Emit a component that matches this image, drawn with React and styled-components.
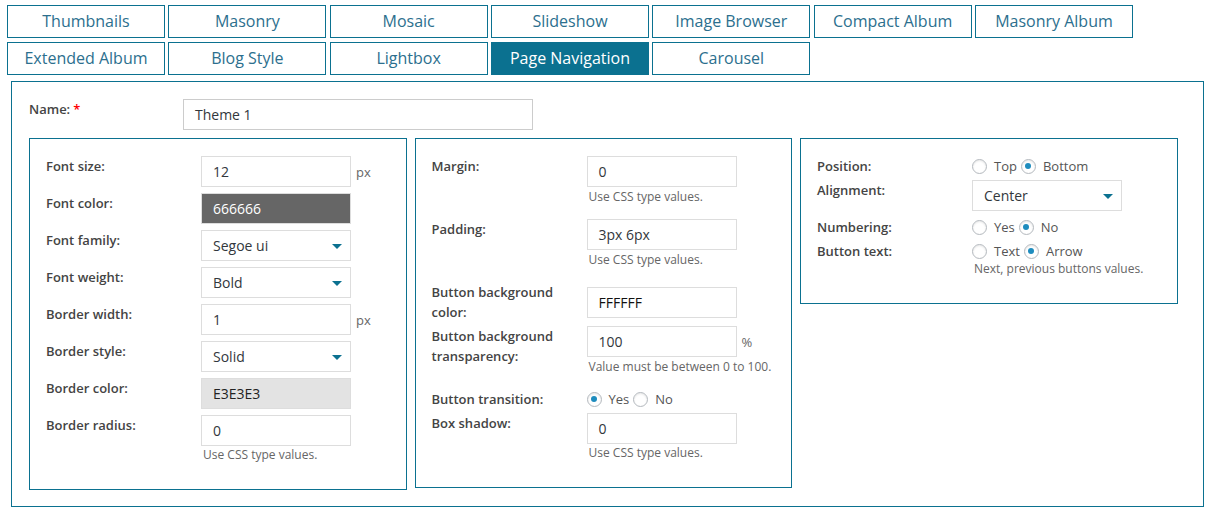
import React from "react";
import styled, { createGlobalStyle } from "styled-components";

const GlobalStyle = createGlobalStyle`
  body {
    margin: 0;
    background: #ffffff;
    font-family: "Open Sans", "Noto Sans", sans-serif;
  }
  * {
    box-sizing: border-box;
  }
`;

const teal = "#0b7190";

const Page = styled.div`
  padding-top: 5px;
  width: 1217px;
`;

const Tabs = styled.div`
  display: grid;
  grid-template-columns: repeat(7, 158px);
  column-gap: 3.33px;
  row-gap: 4px;
  margin-left: 7px;
`;

const Tab = styled.div`
  height: 33px;
  border: 1px solid ${teal};
  display: flex;
  align-items: center;
  justify-content: center;
  padding-bottom: 2px;
  font-size: 16px;
  color: ${(p) => (p.active ? "#ffffff" : "#2c6f8e")};
  background: ${(p) => (p.active ? teal : "#ffffff")};
`;

const Frame = styled.div`
  margin: 6px 13px 0 11px;
  border: 1px solid ${teal};
  padding: 17px 17px 16px 17px;
`;

const NameRow = styled.div`
  display: grid;
  grid-template-columns: 154px 350px;
  margin-bottom: 8px;
`;

const Label = styled.div`
  font-size: 13px;
  font-weight: 600;
  color: #444444;
  line-height: 20px;
  align-self: start;
`;

const Star = styled.span`
  color: #ff0000;
  margin-left: 3px;
`;

const Panels = styled.div`
  display: flex;
  align-items: flex-start;
  gap: 8px;
`;

const Panel = styled.div`
  width: 377.5px;
  border: 1px solid ${teal};
  padding: 17px 16px 16px 16px;
`;

const Row = styled.div`
  display: grid;
  grid-template-columns: 155px 1fr;
  margin-bottom: ${(p) => p.gap ?? 4}px;
  &:last-child {
    margin-bottom: 0;
  }
`;

const Field = styled.div`
  align-self: center;
  display: flex;
  flex-direction: column;
  align-items: flex-start;
`;

const Line = styled.div`
  display: flex;
  align-items: center;
`;

const Input = styled.div`
  width: ${(p) => p.w ?? 150}px;
  height: 31px;
  border: 1px solid ${(p) => p.line ?? "#dddddd"};
  background: ${(p) => p.bg ?? "#ffffff"};
  color: ${(p) => p.fg ?? "#32373c"};
  font-size: 14px;
  padding: 0 11px;
  display: flex;
  align-items: center;
`;

const Select = styled(Input)`
  position: relative;
  &::after {
    content: "";
    position: absolute;
    right: 8px;
    top: 13px;
    border-left: 5px solid transparent;
    border-right: 5px solid transparent;
    border-top: 5px solid ${teal};
  }
`;

const Unit = styled.span`
  margin-left: 5px;
  font-size: 13px;
  color: #666666;
`;

const Help = styled.div`
  font-size: 12px;
  line-height: 16px;
  color: #666666;
  margin: ${(p) => p.top ?? 2}px 0 10px 2px;
`;

const Radios = styled.div`
  height: 20px;
  display: flex;
  align-items: center;
  font-size: 13px;
  color: #555555;
`;

const Radio = styled.span`
  width: 15px;
  height: 15px;
  border-radius: 50%;
  border: 1px solid #b4b9be;
  box-shadow: inset 0 1px 2px rgba(0, 0, 0, 0.1);
  display: inline-flex;
  align-items: center;
  justify-content: center;
  margin-right: 7px;
  &::before {
    content: "";
    width: 6px;
    height: 6px;
    border-radius: 50%;
    background: ${(p) => (p.checked ? "#1e8cbe" : "transparent")};
  }
`;

const Option = styled.span`
  margin-right: 4px;
`;

const RadioGroup = ({ options, value }) => (
  <Radios>
    {options.map((o) => (
      <React.Fragment key={o}>
        <Radio checked={o === value} />
        <Option>{o}</Option>
      </React.Fragment>
    ))}
  </Radios>
);

export default function App() {
  const tabs = [
    "Thumbnails",
    "Masonry",
    "Mosaic",
    "Slideshow",
    "Image Browser",
    "Compact Album",
    "Masonry Album",
    "Extended Album",
    "Blog Style",
    "Lightbox",
    "Page Navigation",
    "Carousel",
  ];

  return (
    <Page>
      <GlobalStyle />
      <Tabs>
        {tabs.map((t) => (
          <Tab key={t} active={t === "Page Navigation"}>
            {t}
          </Tab>
        ))}
      </Tabs>

      <Frame>
        <NameRow>
          <Label>
            Name:<Star>*</Star>
          </Label>
          <Input w={350} line="#cccccc">
            Theme 1
          </Input>
        </NameRow>

        <Panels>
          <Panel>
            <Row gap={6}>
              <Label>Font size:</Label>
              <Field>
                <Line>
                  <Input>12</Input>
                  <Unit>px</Unit>
                </Line>
              </Field>
            </Row>
            <Row gap={6}>
              <Label>Font color:</Label>
              <Field>
                <Input bg="#666666" fg="#ffffff">
                  666666
                </Input>
              </Field>
            </Row>
            <Row gap={6}>
              <Label>Font family:</Label>
              <Field>
                <Select>Segoe ui</Select>
              </Field>
            </Row>
            <Row gap={6}>
              <Label>Font weight:</Label>
              <Field>
                <Select>Bold</Select>
              </Field>
            </Row>
            <Row gap={6}>
              <Label>Border width:</Label>
              <Field>
                <Line>
                  <Input>1</Input>
                  <Unit>px</Unit>
                </Line>
              </Field>
            </Row>
            <Row gap={6}>
              <Label>Border style:</Label>
              <Field>
                <Select>Solid</Select>
              </Field>
            </Row>
            <Row gap={6}>
              <Label>Border color:</Label>
              <Field>
                <Input bg="#e3e3e3" fg="#222222">
                  E3E3E3
                </Input>
              </Field>
            </Row>
            <Row gap={6}>
              <Label>Border radius:</Label>
              <Field>
                <Input>0</Input>
                <Help top={1}>Use CSS type values.</Help>
              </Field>
            </Row>
          </Panel>

          <Panel>
            <Row>
              <Label>Margin:</Label>
              <Field>
                <Input>0</Input>
                <Help>Use CSS type values.</Help>
              </Field>
            </Row>
            <Row>
              <Label>Padding:</Label>
              <Field>
                <Input>3px 6px</Input>
                <Help>Use CSS type values.</Help>
              </Field>
            </Row>
            <Row>
              <Label>
                Button background
                <br />
                color:
              </Label>
              <Field>
                <Input fg="#111111">FFFFFF</Input>
              </Field>
            </Row>
            <Row>
              <Label>
                Button background
                <br />
                transparency:
              </Label>
              <Field>
                <Line>
                  <Input>100</Input>
                  <Unit>%</Unit>
                </Line>
                <Help>Value must be between 0 to 100.</Help>
              </Field>
            </Row>
            <Row>
              <Label>Button transition:</Label>
              <Field>
                <RadioGroup options={["Yes", "No"]} value="Yes" />
              </Field>
            </Row>
            <Row>
              <Label>Box shadow:</Label>
              <Field>
                <Input>0</Input>
                <Help top={1}>Use CSS type values.</Help>
              </Field>
            </Row>
          </Panel>

          <Panel>
            <Row>
              <Label>Position:</Label>
              <Field>
                <RadioGroup options={["Top", "Bottom"]} value="Bottom" />
              </Field>
            </Row>
            <Row gap={6}>
              <Label>Alignment:</Label>
              <Field>
                <Select>Center</Select>
              </Field>
            </Row>
            <Row>
              <Label>Numbering:</Label>
              <Field>
                <RadioGroup options={["Yes", "No"]} value="No" />
              </Field>
            </Row>
            <Row>
              <Label>Button text:</Label>
              <Field>
                <RadioGroup options={["Text", "Arrow"]} value="Arrow" />
                <Help top={0}>Next, previous buttons values.</Help>
              </Field>
            </Row>
          </Panel>
        </Panels>
      </Frame>
    </Page>
  );
}
